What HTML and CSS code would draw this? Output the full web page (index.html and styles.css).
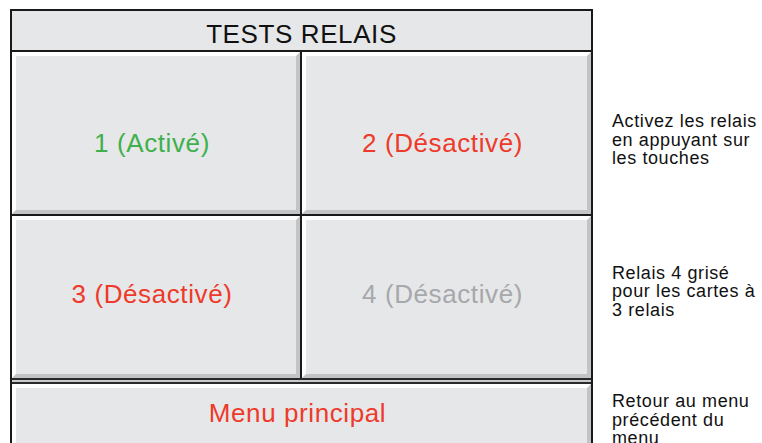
FILE: index.html
```html
<!DOCTYPE html>
<html lang="fr">
<head>
<meta charset="utf-8">
<title>Tests relais</title>
<link rel="stylesheet" href="styles.css">
</head>
<body>
<div class="page">
  <div class="frame">
    <div class="header">TESTS RELAIS</div>
    <div class="grid">
      <div class="btn row1 green">1 (Activé)</div>
      <div class="vline"></div>
      <div class="btn row1 red">2 (Désactivé)</div>
      <div class="hline"></div>
      <div class="btn row2 red">3 (Désactivé)</div>
      <div class="vline"></div>
      <div class="btn row2 grey">4 (Désactivé)</div>
    </div>
    <div class="sep"></div>
    <div class="btn red menu">Menu principal</div>
  </div>
  <div class="notes">
    <p class="note n1">Activez les relais<br>en appuyant sur<br>les touches</p>
    <p class="note n2">Relais 4 grisé<br>pour les cartes à<br>3 relais</p>
    <p class="note n3">Retour au menu<br>précédent du<br>menu</p>
  </div>
</div>
</body>
</html>
```

FILE: styles.css
```css
html, body {
  margin: 0;
  padding: 0;
  background: #fff;
  overflow: hidden;
}
body {
  font-family: "Liberation Sans", Arial, sans-serif;
  color: #111;
}
.page {
  display: flex;
  padding: 9px 0 0 10px;
  height: 443px;
  box-sizing: border-box;
}
.frame {
  width: 583px;
  height: 450px;
  border: 2px solid #1a1a1a;
  border-bottom: none;
  box-sizing: border-box;
  flex: none;
  display: flex;
  flex-direction: column;
}
.header {
  height: 41px;
  border-bottom: 2px solid #1a1a1a;
  background: #e6e7e8;
  display: flex;
  align-items: center;
  justify-content: center;
  font-size: 26px;
  letter-spacing: 0.6px;
  padding-top: 8px;
  box-sizing: border-box;
}
.grid {
  display: grid;
  grid-template-columns: 288px 2px 289px;
  grid-template-rows: 162px 2px 162px;
}
.vline {
  background: #1a1a1a;
}
.hline {
  grid-column: 1 / 4;
  background: #1a1a1a;
}
.btn {
  background: #e6e7e8;
  border: 4px solid;
  border-color: #fff #c3c4c6 #c3c4c6 #fff;
  display: flex;
  align-items: center;
  justify-content: center;
  font-size: 26px;
  letter-spacing: 0.6px;
  padding-right: 8px;
  box-sizing: border-box;
}
.row1 { padding-top: 20px; }
.row2 { padding-bottom: 6px; }
.green { color: #3fb04c; }
.red { color: #ee3a2a; }
.grey { color: #a7a8ab; }
.sep {
  height: 6px;
  border-top: 2px solid #2a2a2a;
  border-bottom: 2px solid #2a2a2a;
  background: #c9cacc;
  box-sizing: border-box;
}
.menu {
  height: 70px;
  padding-bottom: 12px;
}
.notes {
  margin-left: 19px;
  display: flex;
  flex-direction: column;
}
.note {
  margin: 0;
  font-size: 18px;
  line-height: 18.5px;
  letter-spacing: 0.6px;
}
.n1 { margin-top: 103px; }
.n2 { margin-top: 96px; }
.n3 { margin-top: 73px; }
```
